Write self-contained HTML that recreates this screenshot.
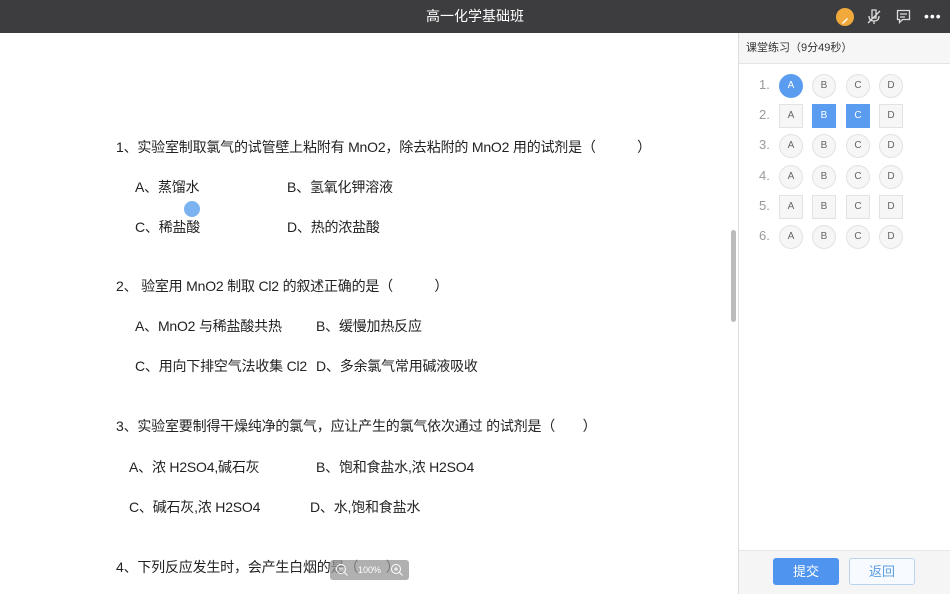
<!DOCTYPE html>
<html><head><meta charset="utf-8"><style>
*{margin:0;padding:0;box-sizing:border-box}
body{width:950px;height:594px;overflow:hidden;background:#fff;font-family:"Liberation Sans","Noto Sans CJK SC",sans-serif;position:relative;color:#222}
.top{position:absolute;left:0;top:0;width:950px;height:33px;background:#3d3d3f;color:#fff;font-size:14px;text-align:center;line-height:33px}
.t{position:absolute;font-size:14px;white-space:nowrap;line-height:20px;letter-spacing:-0.2px}
.sb{position:absolute;left:731px;top:230px;width:5px;height:92px;background:#bbb;border-radius:3px}
.panel{position:absolute;left:738px;top:33px;width:212px;height:561px;border-left:1px solid #ddd;background:#fff}
.ph{height:31px;background:#f6f6f6;border-bottom:1px solid #e4e4e4;font-size:11px;line-height:31px;padding-left:7px;color:#333}
.row{position:absolute;left:0;height:24px;width:212px}
.num{position:absolute;left:20px;top:3px;font-size:13px;color:#999}
.o{position:absolute;top:0;width:24px;height:24px;border:1px solid #e2e2e2;background:#f6f6f6;font-size:10px;color:#666;text-align:center;line-height:22px}
.c{border-radius:50%}
.sel{background:#5a9cf0;border-color:#5a9cf0;color:#fff}
.foot{position:absolute;left:0;bottom:0;width:212px;height:44px;background:#f5f5f5;border-top:1px solid #e6e6e6}
.btn{position:absolute;top:7px;width:66px;height:27px;border-radius:3px;font-size:13px;text-align:center;line-height:27px}
</style></head><body>
<div class="top">高一化学基础班
<div style="position:absolute;left:836px;top:8px;width:18px;height:18px;border-radius:50%;background:#f0a93a"><svg width="18" height="18"><path d="M6 12 L11 7 L12 8 L7 13 Z" fill="#fff"/></svg></div>
<svg style="position:absolute;left:866px;top:8px" width="16" height="18"><path d="M6 2 h4 v8 h-4 z M3 8 q0 5 5 5 q5 0 5 -5 M8 13 v3 M2 15 L14 3" stroke="#ddd" stroke-width="1.3" fill="none"/></svg>
<svg style="position:absolute;left:896px;top:9px" width="15" height="15"><path d="M1.5 1.5 h12 v9 h-7 l-3 3 v-3 h-2 z M4 5 h7 M4 8 h5" stroke="#ddd" stroke-width="1.3" fill="none"/></svg>
<div style="position:absolute;left:924px;top:0;font-size:14px;letter-spacing:1px;color:#fff">•••</div>
</div>
<div class="t" style="left:116px;top:137px">1、实验室制取氯气的试管壁上粘附有 MnO2，除去粘附的 MnO2 用的试剂是（　　　）</div>
<div class="t" style="left:135px;top:177px">A、蒸馏水</div><div class="t" style="left:287px;top:177px">B、氢氧化钾溶液</div>
<div style="position:absolute;left:184px;top:201px;width:16px;height:16px;border-radius:50%;background:#7ab3f0"></div>
<div class="t" style="left:135px;top:217px">C、稀盐酸</div><div class="t" style="left:287px;top:217px">D、热的浓盐酸</div>
<div class="t" style="left:116px;top:276px">2、 验室用 MnO2 制取 Cl2 的叙述正确的是（　　　）</div>
<div class="t" style="left:135px;top:316px">A、MnO2 与稀盐酸共热</div><div class="t" style="left:316px;top:316px">B、缓慢加热反应</div>
<div class="t" style="left:135px;top:356px">C、用向下排空气法收集 Cl2</div><div class="t" style="left:316px;top:356px">D、多余氯气常用碱液吸收</div>
<div class="t" style="left:116px;top:416px">3、实验室要制得干燥纯净的氯气，应让产生的氯气依次通过 的试剂是（　　）</div>
<div class="t" style="left:129px;top:457px">A、浓 H2SO4,碱石灰</div><div class="t" style="left:316px;top:457px">B、饱和食盐水,浓 H2SO4</div>
<div class="t" style="left:129px;top:497px">C、碱石灰,浓 H2SO4</div><div class="t" style="left:310px;top:497px">D、水,饱和食盐水</div>
<div class="t" style="left:116px;top:557px">4、下列反应发生时，会产生白烟的是（　　）</div>
<div style="position:absolute;left:330px;top:560px;width:79px;height:20px;background:rgba(150,150,150,.75);border-radius:3px;color:#fff;font-size:9px;line-height:20px;text-align:center">100%
<svg style="position:absolute;left:5px;top:3px" width="14" height="14"><circle cx="6" cy="6" r="4.5" stroke="#fff" fill="none"/><path d="M4 6h4M9.5 9.5l3 3" stroke="#fff"/></svg>
<svg style="position:absolute;left:60px;top:3px" width="14" height="14"><circle cx="6" cy="6" r="4.5" stroke="#fff" fill="none"/><path d="M4 6h4M6 4v4M9.5 9.5l3 3" stroke="#fff"/></svg></div>
<div class="sb"></div>
<div class="panel"><div class="ph">课堂练习（9分49秒）</div>
<div class="row" style="top:41px"><span class="num">1.</span><div class="o c sel" style="left:40px">A</div><div class="o c" style="left:73px">B</div><div class="o c" style="left:107px">C</div><div class="o c" style="left:140px">D</div></div>
<div class="row" style="top:71px"><span class="num">2.</span><div class="o" style="left:40px">A</div><div class="o sel" style="left:73px">B</div><div class="o sel" style="left:107px">C</div><div class="o" style="left:140px">D</div></div>
<div class="row" style="top:101px"><span class="num">3.</span><div class="o c" style="left:40px">A</div><div class="o c" style="left:73px">B</div><div class="o c" style="left:107px">C</div><div class="o c" style="left:140px">D</div></div>
<div class="row" style="top:132px"><span class="num">4.</span><div class="o c" style="left:40px">A</div><div class="o c" style="left:73px">B</div><div class="o c" style="left:107px">C</div><div class="o c" style="left:140px">D</div></div>
<div class="row" style="top:162px"><span class="num">5.</span><div class="o" style="left:40px">A</div><div class="o" style="left:73px">B</div><div class="o" style="left:107px">C</div><div class="o" style="left:140px">D</div></div>
<div class="row" style="top:192px"><span class="num">6.</span><div class="o c" style="left:40px">A</div><div class="o c" style="left:73px">B</div><div class="o c" style="left:107px">C</div><div class="o c" style="left:140px">D</div></div>
<div class="foot"><div class="btn" style="left:34px;background:#4f94ee;color:#fff">提交</div><div class="btn" style="left:110px;background:#f7fbff;border:1px solid #b9d3ef;color:#5a9ce0;line-height:25px">返回</div></div>
</div>
</body></html>
